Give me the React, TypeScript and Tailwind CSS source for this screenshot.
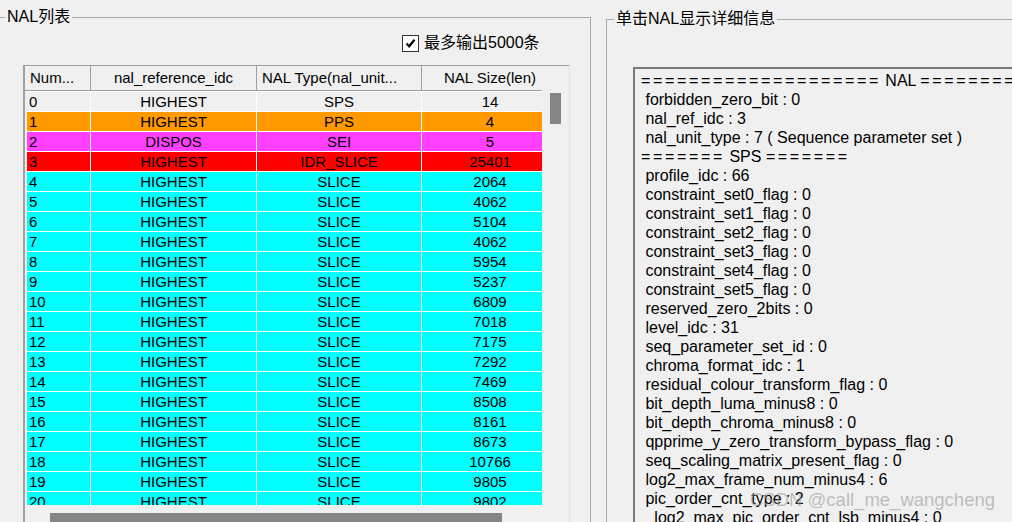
import React from "react";

type Row = [string, string, string, string, string];

const ROWS: Row[] = [
  ["0", "HIGHEST", "SPS", "14", ""],
  ["1", "HIGHEST", "PPS", "4", "bg-[#ff9900]"],
  ["2", "DISPOS", "SEI", "5", "bg-[#ff40ff]"],
  ["3", "HIGHEST", "IDR_SLICE", "25401", "bg-[#ff0000]"],
  ["4", "HIGHEST", "SLICE", "2064", "bg-[#00ffff]"],
  ["5", "HIGHEST", "SLICE", "4062", "bg-[#00ffff]"],
  ["6", "HIGHEST", "SLICE", "5104", "bg-[#00ffff]"],
  ["7", "HIGHEST", "SLICE", "4062", "bg-[#00ffff]"],
  ["8", "HIGHEST", "SLICE", "5954", "bg-[#00ffff]"],
  ["9", "HIGHEST", "SLICE", "5237", "bg-[#00ffff]"],
  ["10", "HIGHEST", "SLICE", "6809", "bg-[#00ffff]"],
  ["11", "HIGHEST", "SLICE", "7018", "bg-[#00ffff]"],
  ["12", "HIGHEST", "SLICE", "7175", "bg-[#00ffff]"],
  ["13", "HIGHEST", "SLICE", "7292", "bg-[#00ffff]"],
  ["14", "HIGHEST", "SLICE", "7469", "bg-[#00ffff]"],
  ["15", "HIGHEST", "SLICE", "8508", "bg-[#00ffff]"],
  ["16", "HIGHEST", "SLICE", "8161", "bg-[#00ffff]"],
  ["17", "HIGHEST", "SLICE", "8673", "bg-[#00ffff]"],
  ["18", "HIGHEST", "SLICE", "10766", "bg-[#00ffff]"],
  ["19", "HIGHEST", "SLICE", "9805", "bg-[#00ffff]"],
  ["20", "HIGHEST", "SLICE", "9802", "bg-[#00ffff]"],
];

const DETAIL = [
  " forbidden_zero_bit : 0",
  " nal_ref_idc : 3",
  " nal_unit_type : 7 ( Sequence parameter set )",
  "SPS",
  " profile_idc : 66",
  " constraint_set0_flag : 0",
  " constraint_set1_flag : 0",
  " constraint_set2_flag : 0",
  " constraint_set3_flag : 0",
  " constraint_set4_flag : 0",
  " constraint_set5_flag : 0",
  " reserved_zero_2bits : 0",
  " level_idc : 31",
  " seq_parameter_set_id : 0",
  " chroma_format_idc : 1",
  " residual_colour_transform_flag : 0",
  " bit_depth_luma_minus8 : 0",
  " bit_depth_chroma_minus8 : 0",
  " qpprime_y_zero_transform_bypass_flag : 0",
  " seq_scaling_matrix_present_flag : 0",
  " log2_max_frame_num_minus4 : 6",
  " pic_order_cnt_type : 2",
  "   log2_max_pic_order_cnt_lsb_minus4 : 0",
];

// '=' in the original font is wider than in Liberation Sans
function Eq({ n }: { n: number }) {
  return <span className="tracking-[2.65px]">{"=".repeat(n)}</span>;
}

export default function App() {
  return (
    <div className="relative w-[1012px] h-[522px] overflow-hidden bg-[#f0f0f0] text-black font-['Liberation_Sans','Noto_Sans_CJK_SC',sans-serif] flex items-start">
      {/* NAL list group */}
      <fieldset className="ml-[-2px] mt-[7px] w-[593px] h-[560px] shrink-0 border border-[#a9a9a9]">
        <legend className="ml-[6px] px-[2px] text-[16px] leading-[20px]">NAL列表</legend>

        <div className="mt-[6px] flex items-center pl-[403px]">
          <div className="w-[17px] h-[17px] border border-[#333] bg-white flex items-center justify-center">
            <svg width="11" height="11" viewBox="0 0 11 11">
              <path d="M1.5 5.5 L4.2 8.3 L9.5 1.8" fill="none" stroke="#000" strokeWidth="2.2" />
            </svg>
          </div>
          <span className="ml-[5px] text-[16px] leading-[20px]">最多输出5000条</span>
        </div>

        {/* list view */}
        <div className="ml-[24px] mt-[12px] w-[547px] h-[480px] border-t border-l-2 border-t-[#a0a0a0] border-l-[#a0a0a0] border-r border-r-[#e3e3e3] flex flex-col">
          <div className="flex h-[439px]">
            <div className="w-[517px] overflow-hidden text-[15px]">
              <div className="grid grid-cols-[66px_166px_165px_136px] h-[25px] leading-[24px]">
                <div className="border-r border-b border-[#a0a0a0] pl-[5px] whitespace-nowrap">Num...</div>
                <div className="border-r border-b border-[#a0a0a0] text-center whitespace-nowrap">nal_reference_idc</div>
                <div className="border-r border-b border-[#a0a0a0] pl-[5px] whitespace-nowrap">NAL Type(nal_unit...</div>
                <div className="border-b border-[#a0a0a0] text-center whitespace-nowrap">NAL Size(len)</div>
              </div>
              <div className="ml-[2px]">
                {ROWS.map((r) => (
                  <div key={r[0]} className="grid grid-cols-[64px_166px_165px_136px] h-[20px] leading-[19px] border-t border-white">
                    <div className={`${r[4]} border-r border-white pl-[2px]`}>{r[0]}</div>
                    <div className={`${r[4]} border-r border-white text-center`}>{r[1]}</div>
                    <div className={`${r[4]} border-r border-white text-center`}>{r[2]}</div>
                    <div className={`${r[4]} text-center`}>{r[3]}</div>
                  </div>
                ))}
              </div>
            </div>
            {/* vertical scrollbar */}
            <div className="flex-1 border-t border-[#a0a0a0] -mt-px">
              <div className="ml-[8px] mt-[27px] w-[11px] h-[31px] bg-[#858585]" />
            </div>
          </div>
          {/* horizontal scrollbar */}
          <div className="flex-1">
            <div className="ml-[25px] mt-[8px] w-[452px] h-[12px] bg-[#858585]" />
          </div>
        </div>
      </fieldset>

      {/* detail group */}
      <fieldset className="ml-[15px] mt-[9px] w-[440px] h-[560px] shrink-0 border border-[#a9a9a9]">
        <legend className="ml-[7px] px-[2px] text-[16px] leading-[20px]">单击NAL显示详细信息</legend>
        <div className="ml-[26px] mt-[38px] w-[420px] h-[480px] border-t-2 border-l-2 border-[#7a7a7a] overflow-hidden">
          <div className="pl-[6px] pt-[2px] text-[16px] leading-[19px] whitespace-pre">
            <div>
              <Eq n={20} /> NAL <Eq n={20} />
            </div>
            {DETAIL.map((l, i) =>
              l === "SPS" ? (
                <div key={i}>
                  <Eq n={7} /> SPS <Eq n={7} />
                </div>
              ) : (
                <div key={i}>{l}</div>
              )
            )}
          </div>
        </div>
      </fieldset>

      {/* watermark */}
      <div className="absolute left-[750px] top-[489px] text-[18.5px] leading-[22px] text-[#9a9a9a]/60 whitespace-nowrap">
        CSDN @call_me_wangcheng
      </div>
    </div>
  );
}
